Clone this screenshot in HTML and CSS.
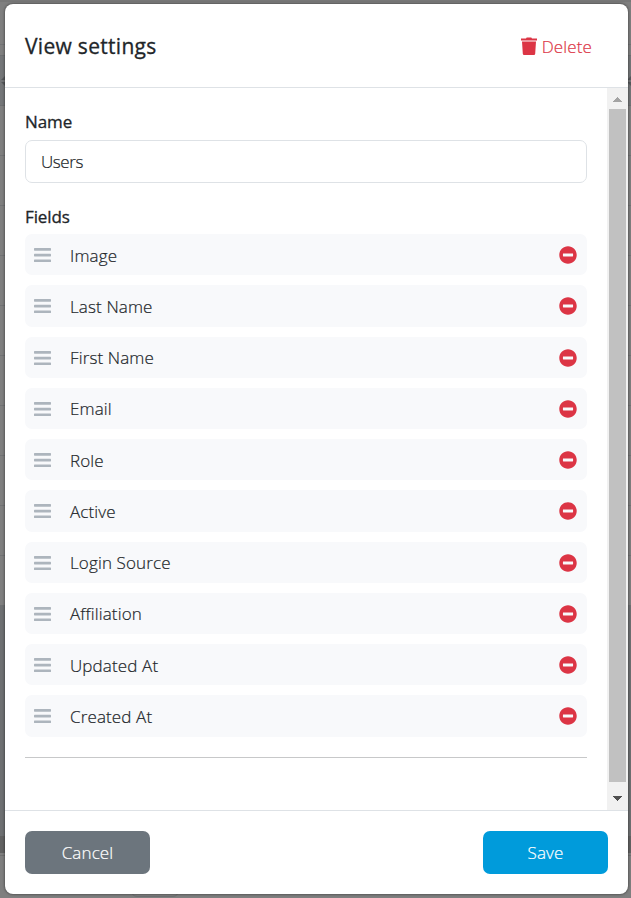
FILE: index.html
```html
<!DOCTYPE html>
<html lang="en">
<head>
<meta charset="utf-8">
<title>View settings</title>
<link rel="stylesheet" href="styles.css">
</head>
<body>
<svg width="0" height="0" class="sprite" aria-hidden="true">
  <symbol id="bars" viewBox="0 0 17 16"><rect y="1" width="17" height="2.700" rx=".6"/><rect y="6.700" width="17" height="2.700" rx=".6"/><rect y="12.400" width="17" height="2.700" rx=".6"/></symbol>
  <symbol id="minus" viewBox="0 0 512 512"><path d="M256 8C119 8 8 119 8 256s111 248 248 248 248-111 248-248S393 8 256 8zM124 296c-6.600 0-12-5.400-12-12v-56c0-6.600 5.400-12 12-12h264c6.600 0 12 5.400 12 12v56c0 6.600-5.400 12-12 12H124z"/></symbol>
</svg>
<div class="backdrop" aria-hidden="true">
  <div class="table-top"></div>
  <div class="table-head"><svg width="5" height="14"><path d="M5 2L1 6h4zM5 12L1 8h4z"/></svg><svg width="4" height="14"><path d="M4 2L0 6h4zM4 12L0 8h4z"/></svg></div>
  <div class="table-rows"></div><div class="table-empty"></div><div class="table-scroll"></div><div class="table-foot"></div>
  <div class="pager"></div>
</div>
<main class="dialog">
  <header class="header">
    <h1>View settings</h1>
    <button class="delete"><svg width="16" height="18" viewBox="0 0 16 18"><path d="M0 1.500h5L5.700.4h4.600L11 1.500h5v2H0zM1 4.600h14l-.8 12.100q-.1 1.300-1.300 1.300H3.100q-1.200 0-1.300-1.300z"/></svg><span>Delete</span></button>
  </header>
  <div class="middle">
    <div class="content">
      <label class="label name" for="name">Name</label>
      <input id="name" class="input" value="Users">
      <div class="label fields">Fields</div>
      <ul class="list">
        <li><svg class="bars"><use href="#bars"/></svg><span>Image</span><svg class="minus"><use href="#minus"/></svg></li>
        <li><svg class="bars"><use href="#bars"/></svg><span>Last Name</span><svg class="minus"><use href="#minus"/></svg></li>
        <li><svg class="bars"><use href="#bars"/></svg><span>First Name</span><svg class="minus"><use href="#minus"/></svg></li>
        <li><svg class="bars"><use href="#bars"/></svg><span>Email</span><svg class="minus"><use href="#minus"/></svg></li>
        <li><svg class="bars"><use href="#bars"/></svg><span>Role</span><svg class="minus"><use href="#minus"/></svg></li>
        <li><svg class="bars"><use href="#bars"/></svg><span>Active</span><svg class="minus"><use href="#minus"/></svg></li>
        <li><svg class="bars"><use href="#bars"/></svg><span>Login Source</span><svg class="minus"><use href="#minus"/></svg></li>
        <li><svg class="bars"><use href="#bars"/></svg><span>Affiliation</span><svg class="minus"><use href="#minus"/></svg></li>
        <li><svg class="bars"><use href="#bars"/></svg><span>Updated At</span><svg class="minus"><use href="#minus"/></svg></li>
        <li><svg class="bars"><use href="#bars"/></svg><span>Created At</span><svg class="minus"><use href="#minus"/></svg></li>
      </ul>
      <hr>
    </div>
    <div class="scrollbar" aria-hidden="true">
      <svg width="21" height="21"><path d="M6 14h9v-1h-1v-1h-1v-1h-1v-1h-1V9h-1v1H9v1H8v1H7v1H6z" fill="#a3a3a3"/></svg>
      <div class="thumb"></div>
      <svg width="21" height="28"><path d="M6 14h9v1h-1v1h-1v1h-1v1h-1v1h-1v-1H9v-1H8v-1H7v-1H6z" fill="#505050"/></svg>
    </div>
  </div>
  <footer class="footer"><button class="btn cancel">Cancel</button><button class="btn save">Save</button></footer>
</main>
</body>
</html>
```
FILE: styles.css
```css
* { box-sizing: border-box; }
body {
  margin: 0;
  height: 898px;
  overflow: hidden;
  padding: 4px 3px 4px 5px;
  background: #7f7f7f;
  color: #212529;
  font: 300 17px/26px "Open Sans", "Noto Sans", sans-serif;
  letter-spacing: .13px;
  -webkit-text-stroke: .2px;
}
button, input { font: inherit; letter-spacing: inherit; }
.sprite { position: absolute; }
.backdrop { position: absolute; inset: 0; z-index: -1; display: flex; flex-direction: column; }
.table-top { height: 55px; border-top: 2px solid #777; background: linear-gradient(#737476, #737476) 0 42px / 100% 1px no-repeat; }
.table-head { display: flex; justify-content: space-between; align-items: center; height: 51px; background: #747678; border: solid #6d6f71; border-width: 1px 0; }
.table-head svg { fill: #55585b; }
.table-rows { height: 499px; background: repeating-linear-gradient(transparent 0 49px, #727375 49px 50px); }
.table-empty { height: 231px; background: #6e7072; }
.table-scroll { height: 17px; background: #626262; }
.table-foot { height: 3px; border-bottom: 1px solid #707070; }
.pager { width: 48px; height: 41px; margin-left: 131px; border: 1px solid #707173; border-radius: 6px; }
.dialog {
  display: flex;
  flex-direction: column;
  width: 623px;
  height: 890px;
  background: #fff;
  border-radius: 8px;
  overflow: hidden;
  box-shadow: 0 0 3px rgba(0, 0, 0, .6);
}
.header {
  height: 84px;
  flex: none;
  display: flex;
  justify-content: space-between;
  align-items: center;
  padding: 1px 36px 0 20px;
  border-bottom: 1px solid #dee2e6;
}
h1 { margin: 0; font-size: 21px; font-weight: 500; letter-spacing: .3px; -webkit-text-stroke: .3px; }
.delete {
  display: flex;
  align-items: center;
  gap: 5px;
  padding: 0;
  border: 0;
  background: none;
  color: #dc3545;
}
.delete svg { fill: currentColor; }
.delete span { padding-top: 1px; }
.middle { flex: 1; display: flex; min-height: 0; }
.content { flex: 1; padding: 21px 20px 0; }
.label { display: block; height: 26px; font-weight: 500; letter-spacing: -.1px; -webkit-text-stroke: .3px; }
.name { margin-bottom: 5px; }
.input {
  display: block;
  width: 562px;
  height: 43px;
  padding: 0 15px;
  border: 1px solid #dee2e6;
  border-radius: 7px;
  color: #212529;
  background: #fff;
  letter-spacing: -.4px;
}
.fields { margin-top: 21px; margin-bottom: 4px; }
.list { list-style: none; margin: 0; padding: 0; display: grid; gap: 10px; }
.list li {
  display: flex;
  align-items: center;
  height: 41.250px;
  padding: 0 10px 0 9px;
  border-radius: 7px;
  background: #f8f9fb;
}
.list span { flex: 1; margin-left: 19px; padding-top: 2px; }
.bars { width: 17px; height: 16px; margin-top: 1px; fill: #adb5bd; }
.minus { width: 18px; height: 18px; margin-top: 1px; fill: #dc3545; }
hr { height: 1px; margin: 20px 0 0; border: 0; background: #c7c8c9; }
.scrollbar { width: 21px; display: flex; flex-direction: column; background: #f1f1f1; }
.thumb { flex: 1; margin: 0 2px; background: #c1c1c1; }
.footer {
  height: 84px;
  display: flex;
  justify-content: space-between;
  align-items: flex-start;
  padding: 20px 20px 0;
  border-top: 1px solid #dee2e6;
}
.btn { width: 125px; height: 43px; padding: 0; border: 0; border-radius: 7px; color: #fff; }
.cancel { background: #6c757d; }
.save { background: #009bdb; }
```
